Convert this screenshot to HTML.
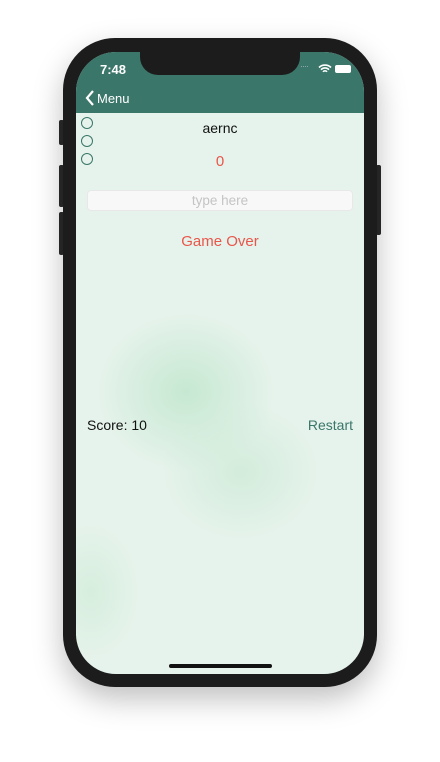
<!DOCTYPE html>
<html><head><style>
body{margin:0;width:440px;height:762px;background:#fff;position:relative;overflow:hidden;font-family:"Liberation Sans",sans-serif}
.btn{position:absolute;background:#2a2a2a;border-radius:2px}
.phone{position:absolute;left:63px;top:38px;width:314px;height:649px;background:#1c1c1c;border-radius:52px;box-shadow:0 12px 30px rgba(0,0,0,.25)}
.screen{position:absolute;left:76px;top:52px;width:288px;height:622px;border-radius:40px;overflow:hidden;
background:radial-gradient(ellipse 90px 80px at 110px 340px,#c6e8d1,transparent),radial-gradient(ellipse 80px 70px at 165px 420px,#d3ecdb,transparent),radial-gradient(ellipse 50px 70px at 15px 540px,#d6eedd,transparent),#e6f3ec}
.nav{position:absolute;left:0;top:0;width:288px;height:61px;background:#3a7669}
.notch{position:absolute;left:64px;top:-1px;width:160px;height:24px;background:#1c1c1c;border-radius:0 0 18px 18px}
.t{position:absolute;white-space:nowrap}
.c{position:absolute;left:5px;width:10px;height:10px;border:1.2px solid #3a7669;border-radius:50%}
</style></head><body>
<div class="btn" style="left:59px;top:120px;width:5px;height:25px"></div>
<div class="btn" style="left:59px;top:165px;width:5px;height:42px"></div>
<div class="btn" style="left:59px;top:212px;width:5px;height:43px"></div>
<div class="btn" style="left:376px;top:165px;width:5px;height:70px"></div>
<div class="phone"></div>
<div class="screen">
 <div class="nav"></div>
 <div class="notch"></div>
 <div class="t" style="left:24px;top:10px;color:#fff;font-size:13px;font-weight:bold">7:48</div>
 <div class="t" style="left:224px;top:9px;color:#9ab;font-size:9px;letter-spacing:-1px">····</div>
 <svg class="t" style="left:242px;top:12px" width="14" height="10" viewBox="0 0 14 10"><path d="M1 3.5a8.5 8.5 0 0 1 12 0M3 5.7a5.5 5.5 0 0 1 8 0M5 7.8a2.5 2.5 0 0 1 4 0" stroke="#fff" stroke-width="1.6" fill="none"/></svg>
 <div class="t" style="left:259px;top:13px;width:14px;height:6px;border:1px solid #fff;border-radius:2px;background:#fff"></div>
 <svg class="t" style="left:9px;top:38px" width="10" height="16" viewBox="0 0 10 16"><path d="M8 1L2 8l6 7" stroke="#fff" stroke-width="2.2" fill="none"/></svg>
 <div class="t" style="left:21px;top:39px;color:#fff;font-size:13px">Menu</div>
 <div class="c" style="top:65px"></div><div class="c" style="top:83px"></div><div class="c" style="top:101px"></div>
 <div class="t" style="left:0;width:288px;text-align:center;top:68px;font-size:14px;color:#111">aernc</div>
 <div class="t" style="left:0;width:288px;text-align:center;top:101px;font-size:15px;color:#e8564a">0</div>
 <div class="t" style="left:11px;top:138px;width:264px;height:19px;background:#f8f8f8;border:1px solid #e8e8e8;border-radius:4px;text-align:center;line-height:19px;font-size:13.5px;color:#c4c4c4">type here</div>
 <div class="t" style="left:0;width:288px;text-align:center;top:181px;font-size:15px;color:#e8564a">Game Over</div>
 <div class="t" style="left:11px;top:365px;font-size:14px;color:#111">Score: 10</div>
 <div class="t" style="right:11px;top:365px;font-size:14px;color:#3a7669">Restart</div>
 <div class="t" style="left:93px;top:612px;width:103px;height:4px;background:#111;border-radius:2px"></div>
</div>
</body></html>
